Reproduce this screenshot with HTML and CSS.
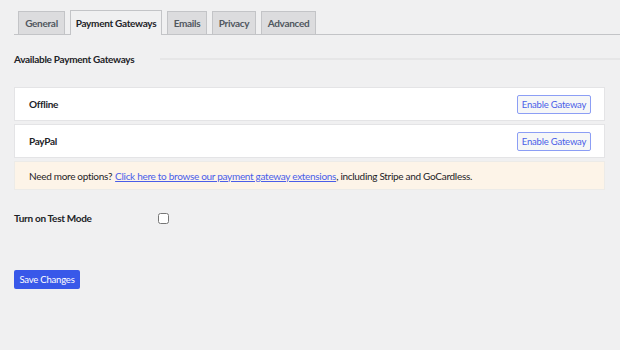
FILE: index.html
```html
<!DOCTYPE html>
<html lang="en">
<head>
  <meta charset="UTF-8" />
  <title>Payment Gateways</title>
  <link rel="stylesheet" href="styles.css">
</head>
<body>
  <div class="wrap">
    <nav class="tabs">
      <a class="tab">General</a>
      <a class="tab active">Payment Gateways</a>
      <a class="tab">Emails</a>
      <a class="tab">Privacy</a>
      <a class="tab">Advanced</a>
    </nav>

    <div class="section-title">
      <h2>Available Payment Gateways</h2>
      <span class="rule"></span>
    </div>

    <div class="gateway">
      <span class="name">Offline</span>
      <button class="btn-outline">Enable Gateway</button>
    </div>
    <div class="gateway">
      <span class="name">PayPal</span>
      <button class="btn-outline">Enable Gateway</button>
    </div>
    <div class="notice">
      Need more options? <a href="#">Click here to browse our payment gateway extensions</a>, including Stripe and GoCardless.
    </div>

    <div class="field">
      <label for="testMode">Turn on Test Mode</label>
      <input type="checkbox" id="testMode" />
    </div>

    <button class="btn-primary">Save Changes</button>
  </div>
</body>
</html>
```

FILE: styles.css
```css
* { box-sizing: border-box; }

body {
  margin: 0;
  background-color: #f0f0f1;
  color: #1d2327;
  font-family: Lato, "Noto Sans", sans-serif;
  font-size: 10px;
  letter-spacing: -0.3px;
}

.wrap {
  padding: 11px 0 0 14px;
}

.tabs {
  display: flex;
  gap: 5px;
  padding-left: 4px;
  border-bottom: 1px solid #c3c4c7;
  height: 24px;
}

.tab {
  display: flex;
  align-items: center;
  justify-content: center;
  height: 23px;
  background-color: #dcdcde;
  border: 1px solid #c3c4c7;
  border-bottom: none;
  color: #50575e;
  font-weight: 700;
}

.tab:nth-child(1) { width: 47px; }
.tab:nth-child(2) { width: 92px; }
.tab:nth-child(3) { width: 40px; }
.tab:nth-child(4) { width: 44px; }
.tab:nth-child(5) { width: 55px; }

.tab.active {
  background-color: #f0f0f1;
  color: #1d2327;
  height: 25px;
  margin-top: -1px;
}

.section-title {
  display: flex;
  align-items: center;
  gap: 26px;
  margin: 18px 0 22px;
}

h2 {
  margin: 0;
  font-size: 10px;
  font-weight: 700;
}

.rule {
  flex: 1;
  height: 2px;
  background-color: #e6e6e7;
}

.gateway {
  display: flex;
  align-items: center;
  justify-content: space-between;
  height: 34px;
  margin: 0 15px 3px 0;
  padding: 0 13px 0 14px;
  background-color: #fff;
  border: 1px solid #e4e4e6;
}

.name {
  color: #1d2327;
  font-weight: 700;
}

.btn-outline {
  width: 74px;
  height: 19px;
  padding: 0;
  background-color: #f6f7f7;
  border: 1px solid #8c9ef5;
  border-radius: 2px;
  color: #4a5ee8;
  font-family: inherit;
  font-size: 9.5px;
  letter-spacing: -0.2px;
}

.notice {
  display: flex;
  align-items: center;
  height: 29px;
  margin-right: 15px;
  padding: 0 14px;
  background-color: #fdf4e8;
  border: 1px solid #ecebe8;
  color: #1d2327;
}

.notice a {
  color: #4a5ee8;
  margin: 0 0 0 3px;
}

.field {
  display: flex;
  align-items: center;
  height: 12px;
  margin: 22px 0 46px;
}

.field label {
  width: 144px;
  font-weight: 700;
}

.field input {
  margin: 0;
  width: 11px;
  height: 11px;
}

.btn-primary {
  width: 66px;
  height: 19px;
  padding: 0;
  background-color: #3858e9;
  border: none;
  border-radius: 2px;
  color: #fff;
  font-family: inherit;
  font-size: 9.5px;
  letter-spacing: -0.2px;
}
```
